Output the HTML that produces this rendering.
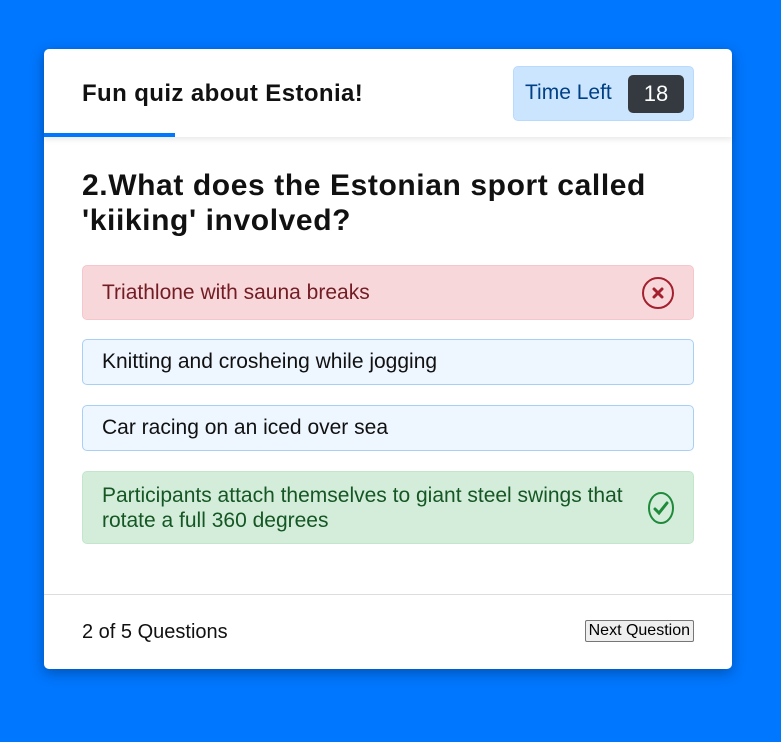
<!DOCTYPE html>
<html><head><style>
*{box-sizing:border-box;margin:0;padding:0}
body{width:781px;height:742px;background:#0077ff;font-family:"Liberation Sans",sans-serif;position:relative;overflow:hidden}
.card{position:absolute;left:44px;top:49px;width:688px;height:620px;background:#fff;border-radius:5px;box-shadow:0 4px 14px rgba(0,0,0,.3)}
.hdr{height:88px;position:relative;box-shadow:0 3px 5px rgba(0,0,0,.08)}
.hdr h1{position:absolute;left:38px;top:31px;font-size:24px;letter-spacing:0.4px;font-weight:bold;color:#111}
.bar{position:absolute;left:0;top:84px;width:131px;height:4px;background:#0077ff}
.timer{position:absolute;left:469px;top:17px;width:181px;height:55px;background:#cce5ff;border:1px solid #b8daff;border-radius:5px}
.timer span.t{position:absolute;left:11px;top:14px;font-size:21px;color:#004085}
.timer .n{position:absolute;left:114px;top:8px;width:56px;height:38px;background:#343a40;color:#fff;border-radius:5px;font-size:22px;text-align:center;line-height:38px}
.q{position:absolute;left:38px;top:119px;font-size:30px;letter-spacing:0.6px;font-weight:bold;line-height:35px;color:#111}
.opt{position:absolute;left:38px;width:612px;border-radius:5px;font-size:21px;letter-spacing:0px;padding-left:19px;display:flex;align-items:center}
.red{top:216px;height:55px;background:#f8d7da;border:1px solid #f5c6cb;color:#721c24}
.blue{background:#eef6ff;border:1px solid #a8d0f5;color:#111;height:46px}
.green{top:422px;height:73px;background:#d4edda;border:1px solid #c3e6cb;color:#155724;line-height:25px}
.ic{position:absolute;right:18px;top:50%;transform:translateY(-50%)}
.ftr{position:absolute;left:0;top:545px;width:100%;border-top:1px solid #ddd;height:75px}
.ftr .c{position:absolute;left:38px;top:26px;font-size:20px;color:#111}
.btn{position:absolute;right:38px;top:25px;font-size:16px;background:#efefef;border:1px solid #767676;border-radius:2px;padding:1px 3px;color:#000}
</style></head><body>
<div class="card">
<div class="hdr"><h1>Fun quiz about Estonia!</h1><div class="bar"></div>
<div class="timer"><span class="t">Time Left</span><div class="n">18</div></div></div>
<div class="q">2.What does the Estonian sport called<br>'kiiking' involved?</div>
<div class="opt red">Triathlone with sauna breaks<svg class="ic" width="34" height="34" viewBox="0 0 34 34"><circle cx="17" cy="17" r="15" fill="none" stroke="#a3212e" stroke-width="2"/><path d="M13 13L21 21M21 13L13 21" stroke="#a3212e" stroke-width="3" stroke-linecap="round"/></svg></div>
<div class="opt blue" style="top:290px">Knitting and crosheing while jogging</div>
<div class="opt blue" style="top:356px">Car racing on an iced over sea</div>
<div class="opt green"><div>Participants attach themselves to giant steel swings that<br>rotate a full 360 degrees</div><svg class="ic" width="28" height="34" viewBox="0 0 28 34"><ellipse cx="14" cy="17" rx="12" ry="15" fill="none" stroke="#1e8a3a" stroke-width="2"/><path d="M8 18L12 22L20 12" fill="none" stroke="#1e8a3a" stroke-width="3" stroke-linecap="round"/></svg></div>
<div class="ftr"><span class="c">2 of 5 Questions</span><span class="btn">Next Question</span></div>
</div>
</body></html>
